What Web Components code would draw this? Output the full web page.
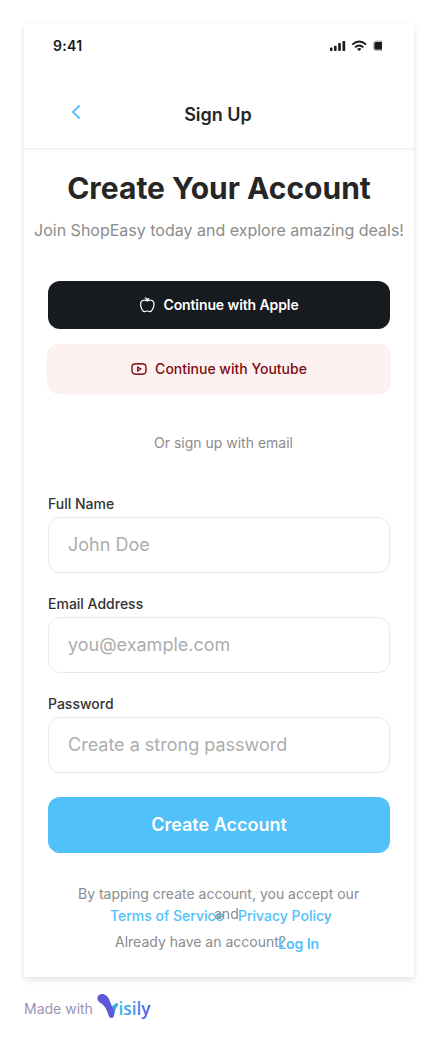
<!DOCTYPE html>
<html lang="en">
<head>
<meta charset="utf-8">
<title>Sign Up</title>
<style>
html,body{margin:0;background:#fff}
body{width:438px;height:1041px;overflow:hidden;font-family:Inter,"Liberation Sans",sans-serif}
</style>
</head>
<body>
<signup-page></signup-page>
<script>
function define(name, html) {
  const t = document.createElement('template');
  t.innerHTML = html;
  customElements.define(name, class extends HTMLElement {
    constructor() {
      super();
      this.attachShadow({mode: 'open'}).append(t.content.cloneNode(true));
    }
  });
}

define('status-bar', `
<style>
:host{display:flex;justify-content:space-between;height:44px;padding:0 31px 0 29px;box-sizing:border-box;color:#171a1f}
.time{font-size:14px;font-weight:600;line-height:22px;margin-top:11px;letter-spacing:.35px}
svg{display:block;margin-top:16px}
</style>
<span class="time">9:41</span>
<svg width="53" height="12" viewBox="0 0 53 12" fill="#171a1f">
<g transform="translate(-.8 0)"><rect x=".7" y="7.6" width="2.6" height="3.4" rx=".8"/><rect x="4.8" y="5.7" width="2.6" height="5.3" rx=".8"/><rect x="9" y="3" width="2.6" height="8" rx=".8"/><rect x="13.3" y="1" width="2.7" height="10" rx=".8"/>
<g fill="none" stroke="#171a1f" stroke-width="1.8"><path d="M23.100 4.700Q30 -1.700 36.900 4.700"/><path d="M25.800 7.400Q30 3.600 34.200 7.400"/></g>
<path d="M27.800 8.900Q30 7.300 32.200 8.900L30 11Z"/></g>
<path d="M52 .5H46.500A3.500 3.500 0 0 0 43 4V7.500A3.500 3.500 0 0 0 46.500 11H52Z" fill="#b9babc"/>
<path d="M52 2H46.200Q44.500 2 44.500 3.700V7.900Q44.500 9.600 46.200 9.600H52Z"/>
</svg>`);

define('nav-header', `
<style>
:host{display:grid;grid-template-columns:1fr auto 1fr;height:82px;box-sizing:border-box;border-bottom:2px solid #f4f4f5}
svg{display:block;margin:36px 0 0 46px}
.t{font-size:18px;font-weight:600;line-height:28px;color:#262626;margin-top:33px;margin-right:2px}
</style>
<svg width="12" height="16" viewBox="0 0 12 16" fill="none" stroke="#50c1f9" stroke-width="1.8"><path d="M9.500 1.500L3 8L9.500 14.500"/></svg>
<span class="t"><slot></slot></span><span></span>`);

define('social-button', `
<style>
:host{display:flex;align-items:center;justify-content:center;gap:8px;height:48px;border-radius:12px;font-size:14px;line-height:22px;background:#171a1f;color:#fff;font-weight:600;letter-spacing:-.1px}
:host([tone="red"]){background:#fef1f1;color:#7d0c10;font-weight:500;border:1px solid #faeded;margin:0 -1px;letter-spacing:0}
::slotted(svg){display:block;flex:none}
</style>
<slot name="icon"></slot><span><slot></slot></span>`);

define('text-field', `
<style>
:host{display:block;height:78px;margin-bottom:22px}
.l{display:block;font-size:14px;font-weight:500;line-height:22px;color:#323232}
.b{display:flex;align-items:center;height:56px;margin-top:2px;box-sizing:border-box;border:1px solid #e9e9ea;border-radius:12px;padding:0 19px 2px;font-size:18px;color:#adadad}
</style>
<span class="l"><slot name="label"></slot></span><div class="b"><span><slot></slot></span></div>`);

define('primary-button', `
<style>
:host{display:flex;align-items:center;justify-content:center;height:56px;border-radius:12px;background:#50c1f9;color:#fff;font-size:18px;font-weight:600;box-sizing:border-box;padding-bottom:1px}
</style><span><slot></slot></span>`);

define('legal-text', `
<style>
:host{display:block;position:relative;height:80px;font-size:14px;line-height:22px;color:#8c8c8c;white-space:nowrap}
span{position:absolute}
b{position:absolute;font-weight:500;color:#50c1f9}
</style>
<span style="left:54px;top:0">By tapping create account, you accept our</span>
<b style="left:86px;top:22px">Terms of Service</b>
<b style="left:214px;top:22px">Privacy Policy</b>
<span style="left:190px;top:20px">and</span>
<span style="left:300px;top:20px">.</span>
<span style="left:91px;top:48px">Already have an account?</span>
<b style="left:254px;top:50px;font-weight:600">Log In</b>`);

define('made-with', `
<style>
:host{display:flex;height:32px;margin:16px 0 0 24px;color:#9a94b3}
.m{font-size:14px;line-height:22px;margin-top:5px;width:69px;white-space:nowrap}
svg{display:block;margin-left:4px}
</style>
<span class="m">Made with</span>
<svg width="58" height="32" viewBox="0 0 58 32">
<defs><linearGradient id="a" x1="0" x2="1"><stop stop-color="#35b6f1"/><stop offset=".45" stop-color="#4598ef"/><stop offset="1" stop-color="#5b55db"/></linearGradient>
<linearGradient id="c" x1="0" y1="1" x2="1" y2="0"><stop stop-color="#437fe8"/><stop offset="1" stop-color="#2fc0f3"/></linearGradient></defs>
<path d="M13.500 25C12.500 16 15.500 10.300 21 10.100Q22 12 20 13.800C18 16 18 21 16.500 24Z" fill="url(#c)"/>
<path d="M.4 5.200C.4 1 6 -.8 9.800 3C13.500 7 14 12.500 17 17.500V21.500Q16.700 25 14.300 25Q12.200 25 11.200 21.500C9.500 15.500 7.500 13 4 10.300Q.4 8.300 .4 5.200Z" fill="#5d59d7"/>
<text x="21.500" y="22" font-family="Open Sans,sans-serif" font-size="18" font-weight="600" textLength="32" lengthAdjust="spacingAndGlyphs" fill="url(#a)">isily</text>
</svg>`);

define('signup-page', `
<style>
:host{display:block;padding-top:24px}
.card{width:390px;height:953px;margin:0 24px;background:#fff;box-shadow:0 3px 6px rgba(23,26,31,.11),0 0 2px rgba(23,26,31,.04)}
h1{margin:18px 0 0;font-size:30px;line-height:40px;font-weight:700;text-align:center;color:#262626;white-space:nowrap}
.sub{margin:9px 0 0;font-size:16px;line-height:26px;text-align:center;color:#8c8c8c;white-space:nowrap}
.body{padding:38px 24px 0}
social-button+social-button{margin-top:15px}
.or{margin:38px 0 39px;font-size:14px;line-height:22px;text-align:center;color:#8c8c8c;padding-left:9px}
primary-button{margin-top:26px}
legal-text{margin-top:30px}
</style>
<div class="card">
<status-bar></status-bar>
<nav-header>Sign Up</nav-header>
<h1>Create Your Account</h1>
<p class="sub">Join ShopEasy today and explore amazing deals!</p>
<div class="body">
<social-button><svg slot="icon" width="16" height="16" viewBox="0 0 16 16" fill="none" stroke="#fff" stroke-width="1.2" stroke-linecap="round" stroke-linejoin="round"><path d="M8.300 4C6.500 2.800 1.600 2.200 1.600 7C1.600 10 3.200 14.600 5.700 14.600C7 14.600 7.300 14 8.300 14S9.500 14.600 10.700 14.600C13.200 14.600 15 10 15 7C15 2.200 10 2.800 8.300 4ZM8.300 4Q8.200 1.500 6.400 .9M8.400 3Q8.700 1.900 9.700 1.700"/></svg>Continue with Apple</social-button>
<social-button tone="red"><svg slot="icon" width="16" height="16" viewBox="0 0 16 16" fill="none" stroke="#7d0c10" stroke-width="1.400" stroke-linejoin="round"><path d="M3.500 3Q8 2.500 12.500 3Q14.700 3.200 14.900 5.200Q15.200 8 14.900 10.800Q14.700 12.800 12.500 13Q8 13.500 3.500 13Q1.300 12.800 1.100 10.800Q.8 8 1.100 5.200Q1.300 3.200 3.500 3Z"/><path d="M6.600 5.900L10 8L6.600 10.100Z" stroke-width="1.200"/></svg>Continue with Youtube</social-button>
<div class="or">Or sign up with email</div>
<text-field><span slot="label">Full Name</span>John Doe</text-field>
<text-field><span slot="label">Email Address</span>you@example.com</text-field>
<text-field><span slot="label">Password</span>Create a strong password</text-field>
<primary-button>Create Account</primary-button>
</div>
<legal-text></legal-text>
</div>
<made-with></made-with>`);
</script>
</body>
</html>
